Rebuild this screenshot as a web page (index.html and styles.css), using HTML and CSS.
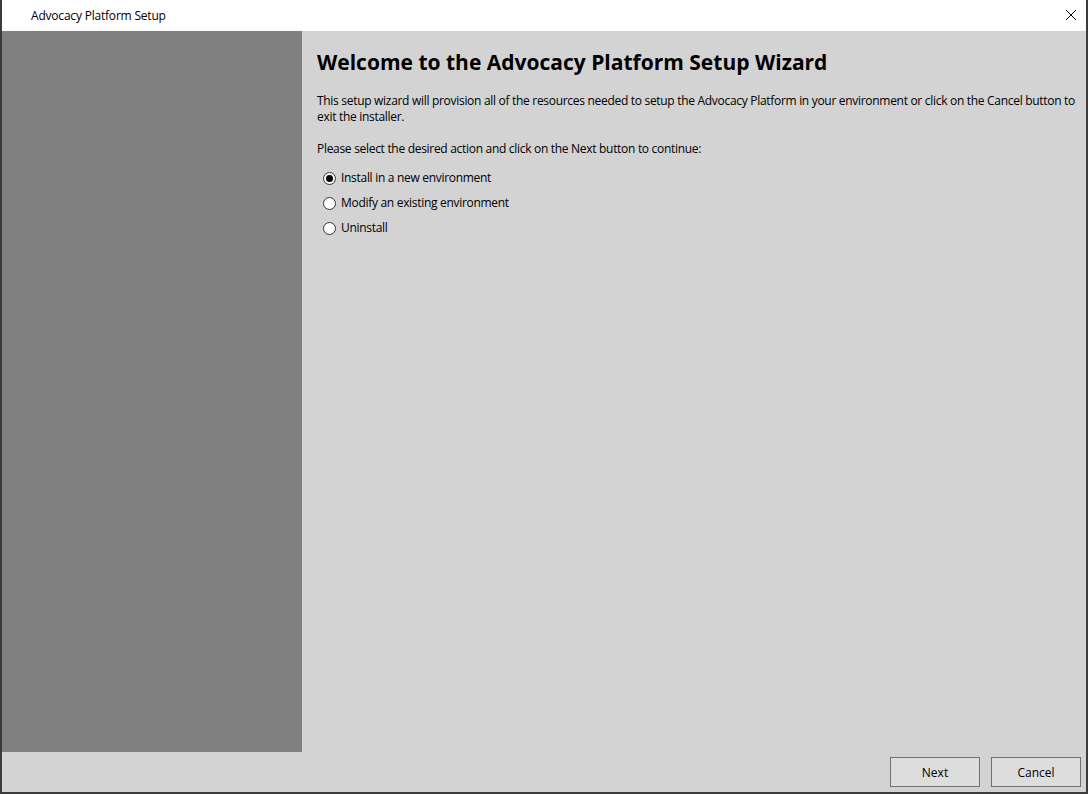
FILE: index.html
```html
<!DOCTYPE html>
<html>
<head>
<meta charset="utf-8">
<link rel="stylesheet" href="styles.css">
</head>
<body>
<div class="window">
  <div class="titlebar">
    <span class="title">Advocacy Platform Setup</span>
    <span class="close" aria-label="Close">
      <svg width="12" height="12" viewBox="0 0 12 12"><path d="M1 1 L11 11 M11 1 L1 11" stroke="#000" stroke-width="1" fill="none"/></svg>
    </span>
  </div>
  <div class="main">
    <div class="side"></div>
    <div class="content">
      <h1 class="heading">Welcome to the Advocacy Platform Setup Wizard</h1>
      <p class="intro">This setup wizard will provision all of the resources needed to setup the Advocacy Platform in your environment or click on the Cancel button to exit the installer.</p>
      <p class="prompt">Please select the desired action and click on the Next button to continue:</p>
      <div class="options">
        <label class="option"><span class="radio checked"></span>Install in a new environment</label>
        <label class="option"><span class="radio"></span>Modify an existing environment</label>
        <label class="option"><span class="radio"></span>Uninstall</label>
      </div>
    </div>
  </div>
  <div class="footer">
    <button class="btn">Next</button>
    <button class="btn">Cancel</button>
  </div>
</div>
</body>
</html>
```
FILE: styles.css
```css
* { box-sizing: border-box; }
html, body { margin: 0; padding: 0; }
body {
  width: 1088px;
  height: 794px;
  overflow: hidden;
  font-family: "Open Sans", "Noto Sans", "Liberation Sans", sans-serif;
  font-size: 12px;
  color: #000;
}
.window {
  width: 1088px;
  height: 794px;
  display: flex;
  flex-direction: column;
  border: 2px solid #3b3b3b;
  border-top: none;
  background: #d3d3d3;
}
.titlebar {
  height: 31px;
  flex: none;
  background: #fff;
  display: flex;
  align-items: center;
  justify-content: space-between;
  padding-left: 29px;
  padding-right: 9px;
}
.title {
  font-size: 12px;
  color: #000;
  letter-spacing: -0.2px;
  margin-top: -1px;
}
.close {
  display: flex;
  width: 12px;
  height: 12px;
  margin-top: -2px;
}
.main {
  flex: none;
  height: 721px;
  display: flex;
}
.side {
  width: 300px;
  flex: none;
  background: #808080;
}
.content {
  flex: 1;
  padding: 17px 0 0 15px;
}
.heading {
  margin: 0;
  font-size: 21px;
  font-weight: 700;
  line-height: 28px;
  letter-spacing: 0;
}
.intro {
  margin: 17px 0 0;
  line-height: 16px;
  letter-spacing: -0.3px;
}
.prompt {
  margin: 16px 0 0;
  line-height: 16px;
  letter-spacing: -0.3px;
}
.options {
  display: flex;
  flex-direction: column;
  gap: 9px;
  margin-top: 13px;
  padding-left: 6px;
}
.option {
  display: flex;
  align-items: center;
  height: 16px;
  line-height: 16px;
  letter-spacing: -0.3px;
}
.radio {
  width: 13px;
  height: 13px;
  border-radius: 50%;
  border: 1px solid #333;
  background: #fff;
  margin-right: 5px;
  display: flex;
  align-items: center;
  justify-content: center;
}
.radio.checked::after {
  content: "";
  width: 7px;
  height: 7px;
  border-radius: 50%;
  background: #000;
}
.footer {
  flex: 1;
  display: flex;
  justify-content: flex-end;
  align-items: flex-start;
  gap: 11px;
  padding: 5px 5px 0 0;
}
.btn {
  width: 90px;
  height: 30px;
  background: #dddddd;
  border: 1px solid #707070;
  border-radius: 0;
  font-family: inherit;
  font-size: 12px;
  color: #000;
  padding: 0;
}
```
